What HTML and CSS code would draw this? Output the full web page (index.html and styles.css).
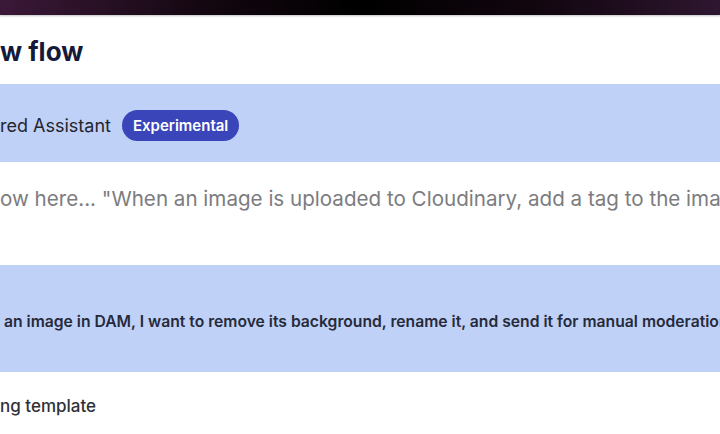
FILE: index.html
```html
<!DOCTYPE html>
<html lang="en">
<head>
    <meta charset="UTF-8">
    <meta name="viewport" content="width=device-width, initial-scale=1.0">
    <title>New flow</title>
    <link rel="stylesheet" href="styles.css">
</head>
<body>
    <div class="topbar"></div>

    <div class="page">
        <h1 class="title">w flow</h1>

        <div class="assistant-bar">
            <span class="assistant-name">red Assistant</span>
            <span class="badge">Experimental</span>
        </div>

        <div class="prompt">
            <p class="placeholder">ow here... "When an image is uploaded to Cloudinary, add a tag to the image"</p>
        </div>

        <div class="example">
            <p class="example-text">an image in DAM, I want to remove its background, rename it, and send it for manual moderation</p>
        </div>

        <div class="template-row">
            <span class="template-link">ng template</span>
        </div>
    </div>
</body>
</html>
```

FILE: styles.css
```css
html, body {
    margin: 0;
    padding: 0;
}

body {
    width: 720px;
    height: 434px;
    overflow: hidden;
    background-color: #ffffff;
    font-family: Inter, "Noto Sans", sans-serif;
    color: #1f2233;
}

.topbar {
    height: 15px;
    background: linear-gradient(90deg, #3b1838 0%, #12060f 30%, #000000 50%, #12060f 75%, #2e1630 100%);
    box-shadow: 0 1px 2px rgba(0,0,0,0.25);
}

.page {
    display: flex;
    flex-direction: column;
}

.title {
    margin: 0;
    height: 69px;
    padding-top: 21px;
    box-sizing: border-box;
    font-size: 26px;
    font-weight: 700;
    color: #161a3a;
    white-space: nowrap;
}

.assistant-bar {
    display: flex;
    align-items: center;
    gap: 11px;
    height: 78px;
    box-sizing: border-box;
    padding-top: 4px;
    background-color: #bfd1f7;
    white-space: nowrap;
}

.assistant-name {
    font-size: 18px;
    color: #23252f;
}

.badge {
    display: inline-flex;
    align-items: center;
    height: 31px;
    padding: 0 11px;
    border-radius: 16px;
    background-color: #3a45b9;
    color: #ffffff;
    font-size: 15px;
    font-weight: 600;
}

.prompt {
    height: 103px;
    box-sizing: border-box;
    padding-top: 24px;
}

.placeholder {
    margin: 0;
    font-size: 20.6px;
    color: #7c7c80;
    white-space: nowrap;
}

.example {
    display: flex;
    align-items: center;
    height: 107px;
    box-sizing: border-box;
    padding-left: 4px;
    padding-top: 5px;
    background-color: #bfd1f7;
}

.example-text {
    margin: 0;
    font-size: 15.7px;
    font-weight: 600;
    color: #262a3a;
    white-space: nowrap;
}

.template-row {
    padding-top: 24px;
}

.template-link {
    font-size: 17px;
    font-weight: 500;
    color: #2f3136;
    white-space: nowrap;
}
```
